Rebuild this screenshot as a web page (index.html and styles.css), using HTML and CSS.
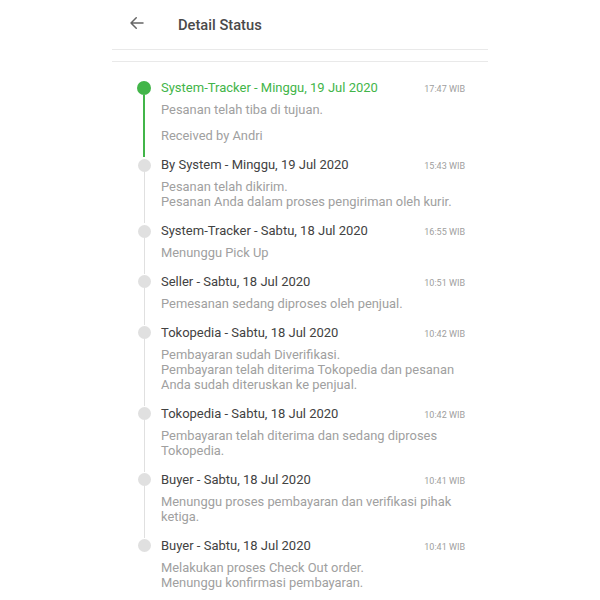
FILE: index.html
```html
<!DOCTYPE html>
<html lang="en">
<head>
  <meta charset="UTF-8">
  <meta name="viewport" content="width=device-width, initial-scale=1.0">
  <title>Detail Status</title>
  <link rel="stylesheet" href="styles.css">
</head>
<body>
  <div class="page">
    <!-- Header -->
    <div class="header">
      <svg class="back" viewBox="0 0 24 24" width="18" height="18">
        <path d="M20 12H4M11 5l-7 7 7 7" fill="none" stroke="#666" stroke-width="2" stroke-linecap="round" stroke-linejoin="round"/>
      </svg>
      <div class="header-title">Detail Status</div>
    </div>
    <div class="spacer"></div>

    <!-- Timeline -->
    <div class="timeline">
      <div class="item active">
        <div class="rail"><span class="dot"></span><span class="line"></span></div>
        <div class="content">
          <div class="row">
            <div class="title">System-Tracker - Minggu, 19 Jul 2020</div>
            <div class="time">17:47 WIB</div>
          </div>
          <div class="desc">Pesanan telah tiba di tujuan.</div>
          <div class="desc extra">Received by Andri</div>
        </div>
      </div>

      <div class="item">
        <div class="rail"><span class="dot"></span><span class="line"></span></div>
        <div class="content">
          <div class="row">
            <div class="title">By System - Minggu, 19 Jul 2020</div>
            <div class="time">15:43 WIB</div>
          </div>
          <div class="desc">Pesanan telah dikirim.<br>Pesanan Anda dalam proses pengiriman oleh kurir.</div>
        </div>
      </div>

      <div class="item">
        <div class="rail"><span class="dot"></span><span class="line"></span></div>
        <div class="content">
          <div class="row">
            <div class="title">System-Tracker - Sabtu, 18 Jul 2020</div>
            <div class="time">16:55 WIB</div>
          </div>
          <div class="desc">Menunggu Pick Up</div>
        </div>
      </div>

      <div class="item">
        <div class="rail"><span class="dot"></span><span class="line"></span></div>
        <div class="content">
          <div class="row">
            <div class="title">Seller - Sabtu, 18 Jul 2020</div>
            <div class="time">10:51 WIB</div>
          </div>
          <div class="desc">Pemesanan sedang diproses oleh penjual.</div>
        </div>
      </div>

      <div class="item">
        <div class="rail"><span class="dot"></span><span class="line"></span></div>
        <div class="content">
          <div class="row">
            <div class="title">Tokopedia - Sabtu, 18 Jul 2020</div>
            <div class="time">10:42 WIB</div>
          </div>
          <div class="desc">Pembayaran sudah Diverifikasi.<br>Pembayaran telah diterima Tokopedia dan pesanan<br>Anda sudah diteruskan ke penjual.</div>
        </div>
      </div>

      <div class="item">
        <div class="rail"><span class="dot"></span><span class="line"></span></div>
        <div class="content">
          <div class="row">
            <div class="title">Tokopedia - Sabtu, 18 Jul 2020</div>
            <div class="time">10:42 WIB</div>
          </div>
          <div class="desc">Pembayaran telah diterima dan sedang diproses<br>Tokopedia.</div>
        </div>
      </div>

      <div class="item">
        <div class="rail"><span class="dot"></span><span class="line"></span></div>
        <div class="content">
          <div class="row">
            <div class="title">Buyer - Sabtu, 18 Jul 2020</div>
            <div class="time">10:41 WIB</div>
          </div>
          <div class="desc">Menunggu proses pembayaran dan verifikasi pihak<br>ketiga.</div>
        </div>
      </div>

      <div class="item last">
        <div class="rail"><span class="dot"></span></div>
        <div class="content">
          <div class="row">
            <div class="title">Buyer - Sabtu, 18 Jul 2020</div>
            <div class="time">10:41 WIB</div>
          </div>
          <div class="desc">Melakukan proses Check Out order.<br>Menunggu konfirmasi pembayaran.</div>
        </div>
      </div>
    </div>
  </div>
</body>
</html>
```

FILE: styles.css
```css
/* General */
body, html {
  margin: 0;
  padding: 0;
  background: #fff;
  font-family: Roboto, "Noto Sans", Arial, sans-serif;
  color: #424242;
}

.page {
  width: 376px;
  margin: 0 auto;
}

/* Header */
.header {
  height: 49px;
  display: flex;
  align-items: center;
  padding-left: 16px;
  border-bottom: 1px solid #e9e9e9;
}

.back {
  margin-top: -3px;
}

.header-title {
  margin-left: 32px;
  font-size: 14.7px;
  font-weight: 500;
  color: #4a4a4a;
}

.spacer {
  height: 11px;
  border-bottom: 1px solid #e9e9e9;
}

/* Timeline */
.timeline {
  padding: 18px 23px 0 25px;
}

.item {
  display: flex;
}

.rail {
  width: 14px;
  margin-right: 10px;
  display: flex;
  flex-direction: column;
  align-items: center;
  flex-shrink: 0;
}

.dot {
  width: 13px;
  height: 13px;
  margin-top: 1.5px;
  border-radius: 50%;
  background: #e0e0e0;
  flex-shrink: 0;
}

.line {
  flex: 1;
  width: 1px;
  background: #e0e0e0;
}

.item.active .dot {
  width: 14px;
  height: 14px;
  margin-top: 1px;
  background: #42b549;
}

.item.active .line {
  width: 1.5px;
  background: #42b549;
}

.content {
  flex: 1;
  padding-bottom: 13.5px;
}

.row {
  display: flex;
  justify-content: space-between;
  align-items: baseline;
  line-height: 16px;
}

.title {
  font-size: 13px;
  color: #424242;
}

.item.active .title {
  color: #42b549;
}

.time {
  font-size: 9px;
  color: #9e9e9e;
}

.desc {
  margin-top: 5px;
  font-size: 12.9px;
  line-height: 15.25px;
  color: #a0a0a0;
}

.desc.extra {
  margin-top: 11px;
}
```
